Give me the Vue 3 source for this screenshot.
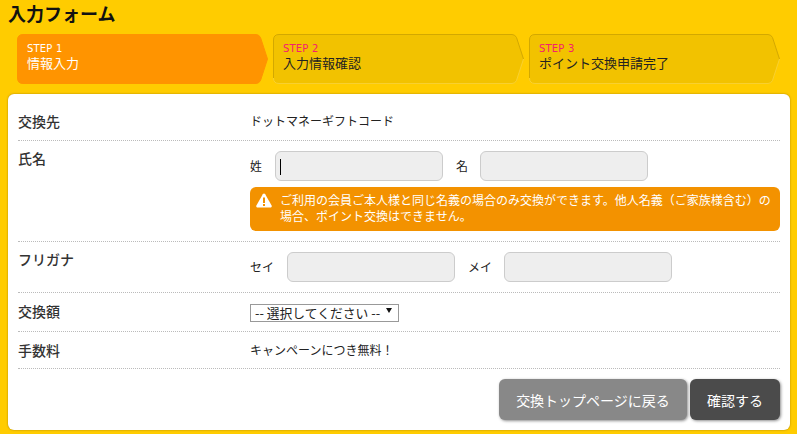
<script setup>
const steps = [
  { no: 'STEP 1', name: '情報入力', active: true },
  { no: 'STEP 2', name: '入力情報確認', active: false },
  { no: 'STEP 3', name: 'ポイント交換申請完了', active: false }
]
</script>

<template>
  <div class="page">
    <h1 class="title">入力フォーム</h1>
    <ol class="steps">
      <li v-for="s in steps" :key="s.no" class="step" :class="{ active: s.active }">
        <svg class="shape" viewBox="0 0 251 50" preserveAspectRatio="none" aria-hidden="true">
          <path class="fill" d="M6 .5H239q3 0 4.500 3L250.500 25l-7 21.500q-1.500 3-4.500 3H6q-5.500 0-5.500-5.500V6Q.5.5 6 .5Z" />
          <path class="edge-top" d="M.5 44V6Q.5.5 6 .5H239q3 0 4.500 3L250.500 25" />
          <path class="edge-bottom" d="M.5 44q0 5.500 5.500 5.500H239q3 0 4.500-3L250.500 25" />
        </svg>
        <span class="no">{{ s.no }}</span>
        <span class="name">{{ s.name }}</span>
      </li>
    </ol>
    <section class="panel">
      <div class="row">
        <div class="label">交換先</div>
        <div class="value">ドットマネーギフトコード</div>
      </div>
      <div class="row">
        <div class="label up">氏名</div>
        <div class="value">
          <div class="names">
            <label class="nm" for="sei">姓</label>
            <span class="field">
              <input id="sei" class="input" type="text" />
              <i class="caret"></i>
            </span>
            <label class="nm second" for="mei">名</label>
            <input id="mei" class="input" type="text" />
          </div>
          <div class="alert">
            <svg class="warn" viewBox="0 0 16 15" aria-hidden="true">
              <path fill="#fff" d="M8 .5c.5 0 .9.300 1.200.800l6.400 11.300c.5.900-.1 1.900-1.100 1.900H1.500c-1 0-1.600-1-1.100-1.900L6.800 1.300C7.100.8 7.500.5 8 .5Z" />
              <rect x="7" y="4.500" width="2" height="5.500" fill="#f39200" />
              <rect x="7" y="11" width="2" height="2" fill="#f39200" />
            </svg>
            <p class="alert-text">ご利用の会員ご本人様と同じ名義の場合のみ交換ができます。他人名義（ご家族様含む）の場合、ポイント交換はできません。</p>
          </div>
        </div>
      </div>
      <div class="row">
        <div class="label up">フリガナ</div>
        <div class="value">
          <div class="names">
            <label class="nm" for="kana1">セイ</label>
            <input id="kana1" class="input" type="text" />
            <label class="nm second" for="kana2">メイ</label>
            <input id="kana2" class="input" type="text" />
          </div>
        </div>
      </div>
      <div class="row slim">
        <div class="label">交換額</div>
        <div class="value select-cell">
          <span class="select-wrap">
            <select class="select">
              <option>-- 選択してください --</option>
            </select>
          </span>
        </div>
      </div>
      <div class="row slim">
        <div class="label">手数料</div>
        <div class="value">キャンペーンにつき無料！</div>
      </div>
      <div class="actions">
        <button class="btn back" type="button">交換トップページに戻る</button>
        <button class="btn ok" type="button">確認する</button>
      </div>
    </section>
  </div>
</template>

<style>
html, body { margin: 0; background: #ffcc00; }
</style>

<style scoped>
.page {
  width: 797px;
  height: 434px;
  box-sizing: border-box;
  padding: 2px 7px 0 8px;
  overflow: hidden;
  background: #ffcc00;
  font-family: "Noto Sans CJK JP", "Noto Sans", sans-serif;
  color: #222;
}
.title {
  margin: 0;
  font-size: 18px;
  line-height: 22px;
  font-weight: 700;
  color: #111;
}
.steps {
  list-style: none;
  display: flex;
  gap: 5px;
  margin: 10px 10px 10px 9px;
  padding: 0;
}
.step {
  position: relative;
  flex: 1 1 0;
  height: 50px;
  box-sizing: border-box;
  padding: 10px 0 0 10px;
  display: flex;
  flex-direction: column;
}
.shape {
  position: absolute;
  inset: 0;
  width: 100%;
  height: 100%;
}
.fill { fill: #f2c200; }
.edge-top { fill: none; stroke: #d3a800; stroke-width: 1; }
.edge-bottom { fill: none; stroke: #f8d030; stroke-width: 1; }
.active .fill { fill: #ff9400; }
.active .edge-top, .active .edge-bottom { stroke: #ff9400; }
.no {
  position: relative;
  font-family: "DejaVu Sans", sans-serif;
  font-size: 10px;
  line-height: 10px;
  letter-spacing: .2px;
  color: #f5206e;
}
.name {
  position: relative;
  font-size: 13px;
  line-height: 17px;
  color: #222;
}
.active .no { color: #fff; }
.active .name { color: #fff; }
.panel {
  background: #fff;
  border-radius: 6px;
  box-shadow: 0 0 2px rgba(120, 90, 0, .7);
  height: 336px;
  box-sizing: border-box;
  padding: 8px 10px 0;
}
.row {
  display: grid;
  grid-template-columns: 232px 1fr;
  padding: 10px 0;
  border-bottom: 1px dotted #bbb;
}
.row.slim { padding: 9px 0; }
.label {
  font-size: 14px;
  line-height: 18px;
  font-weight: 500;
  color: #333;
}
.label.up { line-height: 14px; }
.value {
  font-size: 12px;
  line-height: 18px;
  color: #222;
}
.select-cell { padding-top: 2px; }
.names {
  display: flex;
  align-items: center;
}
.nm { margin-right: 13px; }
.nm.second { margin-right: 12px; }
.input + .nm, .field + .nm { margin-left: 13px; }
.input {
  width: 168px;
  height: 30px;
  box-sizing: border-box;
  background: #eee;
  border: 1px solid #ccc;
  border-radius: 6px;
  margin: 0;
  padding: 0 4px;
  display: block;
}
.field {
  position: relative;
  display: block;
}
.caret {
  position: absolute;
  left: 5px;
  top: 8px;
  width: 1px;
  height: 16px;
  background: #000;
}
.alert {
  display: flex;
  gap: 8px;
  margin-top: 6px;
  height: 44px;
  box-sizing: border-box;
  padding: 5px 6px 0;
  background: #f39200;
  border-radius: 6px;
}
.warn {
  flex: none;
  width: 16px;
  height: 15px;
  margin-top: 1px;
}
.alert-text {
  margin: 0;
  font-size: 12px;
  line-height: 16px;
  color: #fff;
}
.select-wrap {
  position: relative;
  display: block;
  width: 149px;
  height: 18px;
}
.select-wrap::after {
  content: "";
  position: absolute;
  right: 7px;
  top: 4px;
  border-left: 3px solid transparent;
  border-right: 3px solid transparent;
  border-top: 5px solid #111;
}
.select {
  appearance: none;
  display: block;
  width: 100%;
  height: 18px;
  box-sizing: border-box;
  margin: 0;
  padding: 0 0 0 4px;
  background: #fff;
  border: 1px solid #999;
  border-radius: 0;
  font-family: inherit;
  font-size: 12.800px;
  line-height: 16px;
  color: #222;
}
.actions {
  display: flex;
  justify-content: flex-end;
  gap: 3px;
  margin-top: 10px;
}
.btn {
  height: 41px;
  border: 0;
  border-radius: 6px;
  padding: 0;
  font-family: inherit;
  font-size: 14px;
  color: #fff;
  box-shadow: 1px 1px 3px rgba(0, 0, 0, .45);
}
.back { width: 188px; background: #888; }
.ok { width: 90px; background: #4b4b4b; }
</style>
